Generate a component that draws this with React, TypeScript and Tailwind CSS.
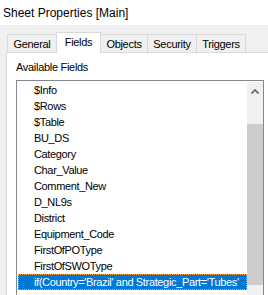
import React from 'react';

const fields = [
  '$Info',
  '$Rows',
  '$Table',
  'BU_DS',
  'Category',
  'Char_Value',
  'Comment_New',
  'D_NL9s',
  'District',
  'Equipment_Code',
  'FirstOfPOType',
  'FirstOfSWOType',
];

const tabs = [
  { label: 'General', w: 'w-[50px]' },
  { label: 'Fields', w: 'w-[45px]', active: true },
  { label: 'Objects', w: 'w-[48px]' },
  { label: 'Security', w: 'w-[50px]' },
  { label: 'Triggers', w: 'w-[50px]' },
];

const App = () => {
  return (
    <div className="w-[268px] h-[295px] overflow-hidden flex flex-col bg-[#f0f0f0] text-black font-['Liberation_Sans',Arial,sans-serif]">
      {/* title */}
      <div className="h-[25px] shrink-0 bg-white pl-[3px] pt-[5px] text-[12px] leading-4">
        Sheet Properties [Main]
      </div>

      <div className="flex-1 flex flex-col pt-[7px]">
        {/* tab strip */}
        <div className="flex items-end h-[20px] pl-[7px]">
          {tabs.map((t, i) => (
            <div
              key={t.label}
              className={
                t.active
                  ? `${t.w} h-[21px] -mb-px relative z-10 bg-white border border-b-0 border-[#d9d9d9] pt-px text-center text-[11px] leading-4 tracking-[-0.3px] ${i > 0 ? '-ml-px' : ''}`
                  : `${t.w} h-[18px] bg-[#f0f0f0] border border-b-0 border-[#d9d9d9] pt-px text-center text-[11px] leading-4 tracking-[-0.3px] ${i > 0 ? '-ml-px' : ''}`
              }
            >
              {t.label}
            </div>
          ))}
        </div>

        {/* tab page */}
        <div className="ml-[6px] w-[300px] flex-1 bg-white border-l border-t border-[#d9d9d9] pl-[9px] pt-[6px]">
          <div className="text-[11px] leading-4 tracking-[-0.3px]">Available Fields</div>

          <div className="mt-[5px] w-[248px] h-[300px] border border-[#828790] pt-px pl-px flex">
            <div className="flex-1 flex flex-col text-[11px] leading-4 tracking-[-0.35px]">
              {fields.map((f) => (
                <div key={f} className="h-4 pl-[16px] whitespace-nowrap">
                  {f}
                </div>
              ))}
              <div className="h-4 pl-[16px] whitespace-nowrap overflow-hidden bg-[#0078d7] text-white outline-1 outline-dotted outline-[#f3a24a] -outline-offset-1">
                if(Country='Brazil' and Strategic_Part='Tubes'
              </div>
            </div>

            {/* scrollbar */}
            <div className="w-[16px] bg-[#f0f0f0] flex flex-col">
              <div className="h-[17px] flex items-center justify-center">
                <svg width="8" height="5" viewBox="0 0 8 5" className="mt-px">
                  <path d="M0.5 4.5 L4 1 L7.5 4.5" fill="none" stroke="#606060" strokeWidth="1.6" />
                </svg>
              </div>
              <div className="h-[25px]" />
              <div className="h-[161px] bg-[#cdcdcd]" />
            </div>
          </div>
        </div>
      </div>
    </div>
  );
};

export default App;
